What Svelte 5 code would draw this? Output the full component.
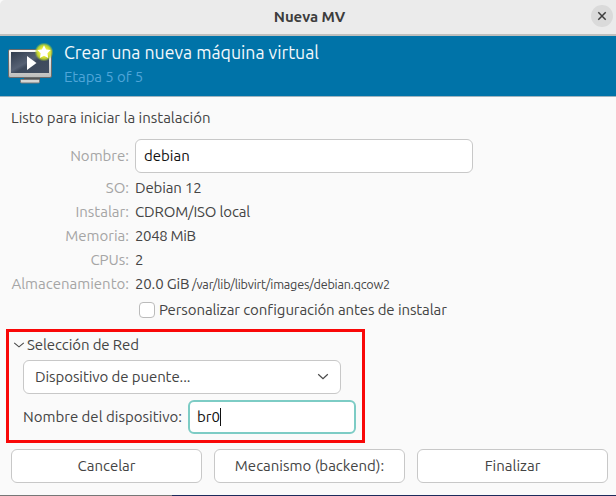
<script>
  const details = [
    { label: 'SO:', value: 'Debian 12', ls: -0.15 },
    { label: 'Instalar:', value: 'CDROM/ISO local', ls: -0.15 },
    { label: 'Memoria:', value: '2048 MiB', ls: -0.35 },
    { label: 'CPUs:', value: '2', ls: 0 }
  ];
</script>

<div class="window">
  <header class="titlebar">
    <h1>Nueva MV</h1>
    <button class="close" aria-label="Cerrar">
      <svg width="10" height="10" viewBox="0 0 10 10"><path d="M1.3 1.3 8.7 8.7M8.7 1.3 1.3 8.7" stroke="#3d3d3d" stroke-width="1.5" fill="none" /></svg>
    </button>
  </header>

  <section class="banner">
    <svg class="logo" width="48" height="44" viewBox="0 0 48 44">
      <defs>
        <linearGradient id="screen" x1="0" y1="0" x2="1" y2="1">
          <stop offset="0" stop-color="#2f3b4c" /><stop offset=".45" stop-color="#566174" /><stop offset=".55" stop-color="#3d495b" /><stop offset="1" stop-color="#424e61" />
        </linearGradient>
        <linearGradient id="frame" x1="0" y1="0" x2="0" y2="1">
          <stop offset="0" stop-color="#fafafa" /><stop offset="1" stop-color="#bdbdbb" />
        </linearGradient>
        <radialGradient id="glow">
          <stop offset="0" stop-color="#fffccc" /><stop offset=".5" stop-color="#e5ea32" /><stop offset=".75" stop-color="#c8d929" stop-opacity=".85" /><stop offset="1" stop-color="#9bc53a" stop-opacity="0" />
        </radialGradient>
      </defs>
      <path d="M18 35h16v4H18z" fill="#555" />
      <rect x="14.5" y="37.5" width="19" height="3.5" rx="1" fill="#d6d6d4" stroke="#777" />
      <rect x="2.5" y="7.5" width="43" height="28" rx="1.5" fill="url(#frame)" stroke="#6b6b6b" />
      <rect x="5" y="10" width="38" height="21" fill="url(#screen)" />
      <path d="M21 14v14l9.5-7z" fill="#fff" />
      <circle cx="38" cy="10" r="9.5" fill="url(#glow)" />
      <path d="m38 3.3 2.1 4.1 4.6.7-3.3 3.2.8 4.6-4.2-2.1-4.1 2.1.8-4.6-3.4-3.2 4.6-.7z" fill="#fff" />
    </svg>
    <div class="heading">
      <h2>Crear una nueva máquina virtual</h2>
      <p>Etapa 5 of 5</p>
    </div>
  </section>

  <main>
    <p class="ready">Listo para iniciar la instalación</p>

    <div class="summary">
      <span class="label name-label">Nombre:</span>
      <div class="entry name">debian</div>
      {#each details as row}
        <span class="label">{row.label}</span>
        <span style="letter-spacing: {row.ls}px">{row.value}</span>
      {/each}
      <span class="label storage">Almacenamiento:</span>
      <span class="disk"><span class="size">20.0 GiB</span><small>/var/lib/libvirt/images/debian.qcow2</small></span>
    </div>

    <div class="customize"><i class="check"></i><span>Personalizar configuración antes de instalar</span></div>

    <section class="network">
      <div class="expander">
        <svg width="12" height="8" viewBox="0 0 12 8"><path d="m1.2 1.8 4.8 4 4.8-4" fill="none" stroke="#484848" stroke-width="1.1" /></svg>
        <span>Selección de Red</span>
      </div>
      <div class="select">
        <span>Dispositivo de puente...</span>
        <svg width="12" height="8" viewBox="0 0 12 8"><path d="m1.2 1.3 4.8 4.5 4.8-4.5" fill="none" stroke="#484848" stroke-width="1.2" /></svg>
      </div>
      <div class="device">
        <span>Nombre del dispositivo:</span>
        <div class="entry focused">br0<i class="caret"></i></div>
      </div>
    </section>

    <footer>
      <button>Cancelar</button>
      <button>Mecanismo (backend):</button>
      <button>Finalizar</button>
    </footer>
  </main>
  <div class="edge"></div>
</div>

<style>
  * { box-sizing: border-box; }
  h1, h2, p { margin: 0; font-weight: 400; }
  svg { display: block; flex: none; }
  span, h1, h2, p { white-space: nowrap; }
  .window {
    width: 616px; height: 496px; overflow: hidden;
    display: flex; flex-direction: column;
    background: #fafafa; color: #444;
    font: 15px/24px 'Ubuntu', 'Noto Sans', sans-serif;
  }
  .titlebar {
    height: 36px; flex: none; display: grid; grid-template-columns: 32px 1fr 32px;
    background: #ebebeb; border-bottom: 2px solid #bfbfbd; border-top-left-radius: 5px;
  }
  h1 { grid-column: 2; text-align: center; font-size: 15px; font-weight: 600; line-height: 33px; color: #3d3d3d; padding-left: 3px; letter-spacing: -.1px; }
  .close {
    width: 22px; height: 22px; margin: 5px 0 0 7px; padding: 0; border: 0; border-radius: 50%;
    display: grid; place-items: center; background: #dadada;
  }
  .banner { height: 61px; flex: none; display: flex; background: #0073a8; border-bottom: 1px solid #9fb4bf; padding: 6px 0 0 6px; }
  .heading { padding-left: 10px; }
  h2 { font-size: 17.7px; line-height: 22px; color: #f4f9fc; }
  .heading p { color: #4fa5d8; line-height: 25px; letter-spacing: -.1px; }
  main { padding: 9px 8px 0 11px; flex: 1; }
  .summary { display: grid; grid-template-columns: 118px 1fr; column-gap: 6px; margin-top: 9px; line-height: 24px; }
  .label { color: #a5a5a5; text-align: right; }
  .name-label { line-height: 34px; height: 37px; }
  .entry { height: 34px; border: 1px solid #c8c8c8; border-radius: 6px; background: #fff; color: #111; padding-left: 8px; line-height: 32px; }
  .name { width: 338px; }
  .disk { display: flex; }
  .size { width: 57px; letter-spacing: -.15px; }
  small { font-size: 12.6px; letter-spacing: -.2px; }
  .customize { display: flex; align-items: center; height: 24px; margin: 2px 0 0 128px; gap: 4px; letter-spacing: -.1px; }
  .check { width: 16px; height: 16px; border: 1px solid #bbb; border-radius: 4px; background: #fff; }
  .network { width: 359px; height: 114px; margin: 7px 0 0 -5px; border: 3px solid #f90808; padding: 2px 0 0 14px; }
  .expander { display: flex; align-items: center; margin-left: -10px; gap: 2px; height: 22px; letter-spacing: -.1px; }
  .select {
    width: 318px; height: 34px; margin-top: 4px; border: 1px solid #c8c8c8; border-radius: 6px; background: #fff;
    padding: 0 11px; display: flex; align-items: center; justify-content: space-between; letter-spacing: -.08px;
  }
  .device { display: flex; margin-top: 6px; line-height: 34px; }
  .device > span { width: 165px; }
  .focused { width: 168px; border: 2px solid #7dccc5; padding-left: 7px; line-height: 30px; display: flex; align-items: center; }
  .caret { width: 1px; height: 18px; background: #111; }
  footer { display: grid; grid-template-columns: repeat(3, 191px); column-gap: 12px; margin-top: 6px; }
  footer button { height: 34px; border: 1px solid #c8c8c8; border-radius: 6px; background: #fff; color: #444; font: inherit; line-height: 32px; padding: 0; }
  .edge { height: 1px; flex: none; background: linear-gradient(90deg, #777 172px, #1d2b5c 172px); }
</style>
